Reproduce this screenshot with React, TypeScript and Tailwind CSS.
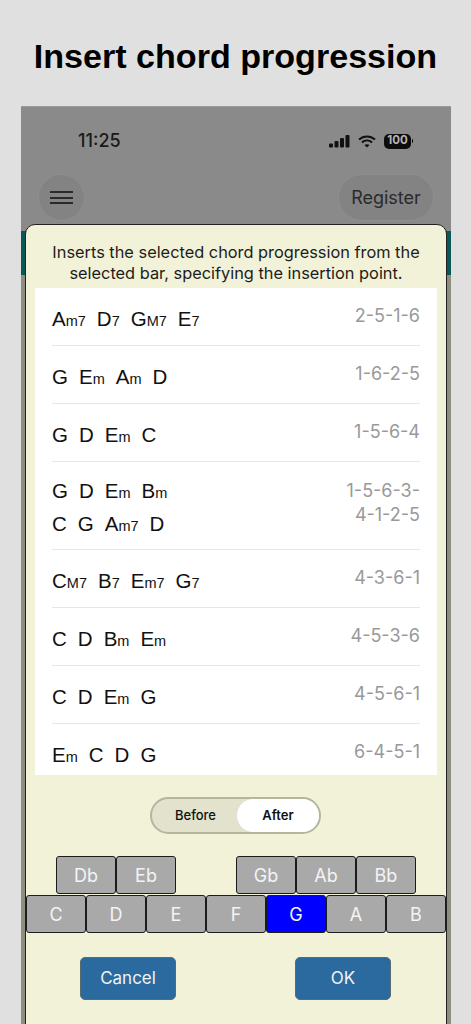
const progressions: { lines: string[][][]; degrees: string[] }[] = [
  { lines: [[['A', 'm7'], ['D', '7'], ['G', 'M7'], ['E', '7']]], degrees: ['2-5-1-6'] },
  { lines: [[['G', ''], ['E', 'm'], ['A', 'm'], ['D', '']]], degrees: ['1-6-2-5'] },
  { lines: [[['G', ''], ['D', ''], ['E', 'm'], ['C', '']]], degrees: ['1-5-6-4'] },
  {
    lines: [
      [['G', ''], ['D', ''], ['E', 'm'], ['B', 'm']],
      [['C', ''], ['G', ''], ['A', 'm7'], ['D', '']],
    ],
    degrees: ['1-5-6-3-', '4-1-2-5'],
  },
  { lines: [[['C', 'M7'], ['B', '7'], ['E', 'm7'], ['G', '7']]], degrees: ['4-3-6-1'] },
  { lines: [[['C', ''], ['D', ''], ['B', 'm'], ['E', 'm']]], degrees: ['4-5-3-6'] },
  { lines: [[['C', ''], ['D', ''], ['E', 'm'], ['G', '']]], degrees: ['4-5-6-1'] },
  { lines: [[['E', 'm'], ['C', ''], ['D', ''], ['G', '']]], degrees: ['6-4-5-1'] },
]

function Key({ label, active }: { label: string; active?: boolean }) {
  return (
    <div
      className={`flex h-[38px] w-[60px] items-center justify-center rounded-[3px] border border-[#1c1c1c] text-[18px] text-[#f4f4f4] ${
        active ? 'bg-[#0000ff]' : 'bg-[#a9a9a9]'
      }`}
    >
      {label}
    </div>
  )
}

function StatusIcons() {
  return (
    <div className="flex items-center gap-[8px]">
      <svg width="21" height="13" viewBox="0 0 21 13" fill="#111">
        <rect x="0" y="8.5" width="4" height="4" rx="1" />
        <rect x="5.5" y="6" width="4" height="6.5" rx="1" />
        <rect x="11" y="3" width="4" height="9.5" rx="1" />
        <rect x="16.5" y="0" width="4" height="12.5" rx="1" />
      </svg>
      <svg width="18" height="13" viewBox="0 0 18 13" fill="none" stroke="#111" strokeWidth="2">
        <path d="M1 4.6C5.6 .4 12.4 .4 17 4.6" />
        <path d="M3.9 7.6C6.9 4.9 11.1 4.9 14.1 7.6" />
        <path d="M9 12.6 6.4 10.1C8 8.8 10 8.8 11.6 10.1Z" fill="#111" stroke="none" />
      </svg>
      <div className="flex items-center">
        <div className="flex h-[15px] w-[27px] items-center justify-center rounded-[5px] bg-[#0d0d0d] text-[11.5px] font-bold leading-none text-[#b5b5b5]">
          100
        </div>
        <div className="ml-[1px] h-[4px] w-[1px] rounded-r bg-[#111]" />
      </div>
    </div>
  )
}

export default function App() {
  return (
    <div className="flex h-[1024px] w-[471px] flex-col overflow-hidden bg-[#e0e0e0] font-['Inter',sans-serif]">
      <h1 className="flex h-[106px] items-center justify-center pt-[8px] font-['Liberation_Sans',sans-serif] text-[34.1px] font-bold text-black">
        Insert chord progression
      </h1>

      <div className="relative ml-[21px] mr-[20px] flex flex-1 flex-col border-t border-[#9a9a9a] bg-[#8a8a8a]">
        {/* dimmed screen behind the dialog */}
        <div className="flex h-[67px] items-start justify-between pl-[57px] pr-[38px] pt-[22px]">
          <span className="text-[18px] font-medium leading-[24px] text-[#1a1a1a]">11:25</span>
          <div className="flex h-[24px] items-center">
            <StatusIcons />
          </div>
        </div>
        <div className="flex items-center justify-between px-[17px]">
          <div className="flex h-[47px] w-[47px] flex-col items-center justify-center gap-[3.5px] rounded-full border border-[#8f8f8f] bg-[#838383]">
            <div className="h-[2px] w-[23px] bg-[#2a2a2a]" />
            <div className="h-[2px] w-[23px] bg-[#2a2a2a]" />
            <div className="h-[2px] w-[23px] bg-[#2a2a2a]" />
          </div>
          <div className="flex h-[47px] w-[96px] items-center justify-center rounded-full border border-[#8f8f8f] bg-[#838383] text-[18px] text-[#2a2a2a]">
            Register
          </div>
        </div>
        <div className="mt-[10px] h-[44px] bg-[#0b5858]" />
        <div className="flex-1 bg-[#8e8e80]" />

        <div className="absolute bottom-[-2px] left-[4px] right-[4px] top-[117px] flex flex-col items-center rounded-t-[10px] border border-[#222] bg-[#f2f2d9]">
          <p className="mt-[17px] w-full text-center text-[16.35px] leading-[20.5px] text-[#1c1c1c]">
            Inserts the selected chord progression from the
            <br />
            selected bar, specifying the insertion point.
          </p>

          <div className="mt-[5px] h-[487px] w-[402px] overflow-hidden bg-white px-[17px]">
            {progressions.map((row, i) => (
              <div
                key={i}
                className={`flex items-center justify-between border-b border-[#e6e6e6] ${
                  row.lines.length > 1 ? 'h-[88px]' : 'h-[58px]'
                }`}
              >
                <div className="flex flex-col gap-[7px] pt-[6px]">
                  {row.lines.map((line, j) => (
                    <div
                      key={j}
                      className="flex gap-[11px] font-['Liberation_Sans',sans-serif] text-[20.5px] leading-[23px] text-[#111]"
                    >
                      {line.map(([root, suffix], k) => (
                        <span key={k}>
                          {root}
                          {suffix && <span className="text-[14.5px]">{suffix}</span>}
                        </span>
                      ))}
                    </div>
                  ))}
                </div>
                <div
                  className={`text-right text-[18px] leading-[24px] text-[#999999] ${
                    row.lines.length > 1 ? 'pb-[6px]' : 'pb-[1px]'
                  }`}
                >
                  {row.degrees.map((d) => (
                    <div key={d}>{d}</div>
                  ))}
                </div>
              </div>
            ))}
          </div>

          <div className="mr-[1px] mt-[22px] flex h-[37px] w-[171px] rounded-full border-2 border-[#b5b5a0] bg-[#e3e3cd] text-[13px] font-medium text-[#111]">
            <div className="flex flex-1 items-center justify-center pl-[2px]">Before</div>
            <div className="flex w-[82px] items-center justify-center rounded-full bg-white font-semibold">After</div>
          </div>

          <div className="mt-[22px] flex w-full flex-col gap-[1px]">
            <div className="flex pl-[30px]">
              <Key label="Db" />
              <Key label="Eb" />
              <div className="w-[60px]" />
              <Key label="Gb" />
              <Key label="Ab" />
              <Key label="Bb" />
            </div>
            <div className="flex">
              {['C', 'D', 'E', 'F', 'G', 'A', 'B'].map((k) => (
                <Key key={k} label={k} active={k === 'G'} />
              ))}
            </div>
          </div>

          <div className="mt-[24px] flex w-full justify-between pl-[54px] pr-[55px]">
            <div className="flex h-[43px] w-[96px] items-center justify-center rounded-[5px] border border-[#5a6a70] bg-[#2a6a9f] text-[17px] text-[#f2f2f2]">
              Cancel
            </div>
            <div className="flex h-[43px] w-[96px] items-center justify-center rounded-[5px] border border-[#5a6a70] bg-[#2a6a9f] text-[17px] text-[#f2f2f2]">
              OK
            </div>
          </div>
        </div>
      </div>
    </div>
  )
}
